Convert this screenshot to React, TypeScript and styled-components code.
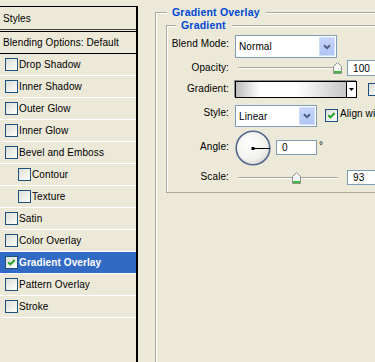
import React from 'react';
import styled, { createGlobalStyle } from 'styled-components';

const GlobalStyle = createGlobalStyle`
  html, body { margin: 0; padding: 0; }
  body {
    background: #ece9d8;
    font-family: "Liberation Sans", Arial, sans-serif;
    font-size: 10px;
    letter-spacing: 0.1px;
    color: #000;
    overflow: hidden;
  }
`;

const Dialog = styled.div`
  display: flex;
  width: 375px;
  height: 362px;
  overflow: hidden;
  background: #ece9d8;
`;

/* ---------- left: styles list ---------- */

const Sidebar = styled.div`
  flex: none;
  width: 138px;
  padding-top: 6px;
  display: flex;
  flex-direction: column;
`;

const StyleList = styled.div`
  flex: 1;
  border-right: 2px solid #000;
`;

const ListHeader = styled.div`
  height: 22px;
  display: flex;
  align-items: center;
  padding-left: 3px;
  border-top: 1px solid #000;
  border-bottom: 1px solid #404040;
  margin-bottom: 1px;
`;

const BlendingRow = styled.div`
  height: 21px;
  display: flex;
  align-items: center;
  padding-left: 3px;
  border-top: 1px solid #000;
  border-bottom: 1px solid #000;
`;

const StyleRow = styled.div<{ $indent: boolean; $active: boolean }>`
  height: 21px;
  display: flex;
  align-items: center;
  gap: 1px;
  padding-left: ${p => (p.$indent ? 18 : 5)}px;
  border-bottom: 1px solid #fff;
  background: ${p => (p.$active ? '#316ac5' : 'transparent')};
  color: ${p => (p.$active ? '#fff' : '#000')};
  font-weight: ${p => (p.$active ? 'bold' : 'normal')};
`;

const CheckFrame = styled.span`
  flex: none;
  box-sizing: border-box;
  width: 13px;
  height: 13px;
  border: 1px solid #1c5180;
  background: linear-gradient(135deg, #dcdcd7 0%, #f3f3ef 65%, #fff 100%);
  display: flex;
  align-items: center;
  justify-content: center;
`;

function CheckBox({ checked }: { checked?: boolean }) {
  return (
    <CheckFrame>
      {checked && (
        <svg width="11" height="11" viewBox="0 0 11 11">
          <path d="M2.3 5.2 L4.4 7.4 L8.6 3" fill="none" stroke="#21a121" strokeWidth="2" />
        </svg>
      )}
    </CheckFrame>
  );
}

const effects = [
  { name: 'Drop Shadow' },
  { name: 'Inner Shadow' },
  { name: 'Outer Glow' },
  { name: 'Inner Glow' },
  { name: 'Bevel and Emboss' },
  { name: 'Contour', sub: true },
  { name: 'Texture', sub: true },
  { name: 'Satin' },
  { name: 'Color Overlay' },
  { name: 'Gradient Overlay', on: true },
  { name: 'Pattern Overlay' },
  { name: 'Stroke' },
];

/* ---------- right: settings ---------- */

const Main = styled.div`
  flex: 1;
  min-width: 0;
  padding: 6px 0 0 17px;
`;

const Group = styled.fieldset<{ $w: number }>`
  margin: 0;
  padding: 0;
  width: ${p => p.$w}px;
  min-width: 0;
  border: 1px solid #aca899;
  box-shadow: inset 1px 1px 0 #fff;
`;

const OuterGroup = styled(Group)`
  min-height: 420px;
`;

const GroupTitle = styled.legend<{ $inset: number }>`
  margin-left: ${p => p.$inset}px;
  padding: 0 6px 0 5px;
  font-size: 10.5px;
  font-weight: bold;
  line-height: 13px;
  letter-spacing: 0.2px;
  color: #0046d5;
  background: #ece9d8;
`;

const OuterBody = styled.div`
  padding-left: 10px;
`;

const Fields = styled.div`
  padding: 3px 0 5px 0;
`;

const FieldRow = styled.div<{ $h: number }>`
  display: flex;
  align-items: flex-start;
  height: ${p => p.$h}px;
`;

const FieldLabel = styled.div<{ $top: number }>`
  flex: none;
  width: 62px;
  margin-right: 6px;
  text-align: right;
  line-height: 12px;
  padding-top: ${p => p.$top}px;
`;

const Combo = styled.div<{ $w: number; $h: number; $top: number }>`
  flex: none;
  box-sizing: border-box;
  width: ${p => p.$w}px;
  height: ${p => p.$h}px;
  margin-top: ${p => p.$top}px;
  padding: 1px;
  border: 1px solid #7f9db9;
  background: #fff;
  display: flex;
  align-items: stretch;
`;

const ComboText = styled.span`
  flex: 1;
  padding-left: 2px;
  display: flex;
  align-items: center;
`;

const ComboButton = styled.span`
  flex: none;
  box-sizing: border-box;
  width: 16px;
  border: 1px solid #d0ddfb;
  border-radius: 1px;
  background: linear-gradient(#c4d4fb, #b2c5f3);
  display: flex;
  align-items: center;
  justify-content: center;
`;

function Select({ value, w, h, top }: { value: string; w: number; h: number; top: number }) {
  return (
    <Combo $w={w} $h={h} $top={top}>
      <ComboText>{value}</ComboText>
      <ComboButton>
        <svg width="8" height="6" viewBox="0 0 8 6">
          <path d="M1 1.2 L4 4.2 L7 1.2" fill="none" stroke="#4d6185" strokeWidth="2" />
        </svg>
      </ComboButton>
    </Combo>
  );
}

const TextField = styled.div<{ $w: number; $h: number; $top: number }>`
  flex: none;
  box-sizing: border-box;
  width: ${p => p.$w}px;
  height: ${p => p.$h}px;
  margin-top: ${p => p.$top}px;
  padding-left: 5px;
  border: 1px solid #7f9db9;
  background: #fff;
  display: flex;
  align-items: center;
`;

const SliderBox = styled.div<{ $top: number }>`
  flex: none;
  position: relative;
  width: 108px;
  height: 14px;
  margin: ${p => p.$top}px 4px 0 0;
`;

const SliderTrack = styled.div`
  width: 100px;
  height: 0;
  margin: 6px 0 0 3px;
  border-top: 1px solid #a5a394;
  border-bottom: 1px solid #fff;
  border-radius: 1px;
`;

const SliderThumb = styled.svg`
  position: absolute;
  top: 1px;
`;

function Slider({ frac, top }: { frac: number; top: number }) {
  return (
    <SliderBox $top={top}>
      <SliderTrack />
      <SliderThumb
        width="9"
        height="12"
        viewBox="0 0 9 12"
        style={{ left: 3 + frac * 99 - 4.5 }}
      >
        <path d="M0.5 4.5 L4.5 0.5 L8.5 4.5 V11.5 H0.5 Z" fill="#f6f6f3" stroke="#8f9190" />
        <rect x="1" y="9" width="7" height="2" fill="#3cba3c" />
      </SliderThumb>
    </SliderBox>
  );
}

const GradientField = styled.div`
  flex: none;
  box-sizing: border-box;
  width: 122px;
  height: 17px;
  margin-top: 3px;
  border: 1px solid #000;
  box-shadow: -1px -1px 0 #8c8c8c;
  display: flex;
`;

const GradientPreview = styled.div`
  flex: 1;
  border-right: 1px solid #000;
  background: linear-gradient(to right, #bdbdbd 0%, #fff 22%, #fff 55%, #c6c6c6 100%);
`;

const PickerArrow = styled.div`
  width: 9px;
  background: #fff;
  display: flex;
  align-items: center;
  justify-content: center;
`;

const Spaced = styled.div<{ $left: number; $top: number }>`
  flex: none;
  display: flex;
  align-items: flex-start;
  gap: 2px;
  margin: ${p => p.$top}px 0 0 ${p => p.$left}px;
  white-space: nowrap;
`;

const InlineText = styled.span<{ $top?: number }>`
  line-height: 12px;
  margin-top: ${p => p.$top ?? 0}px;
`;

const Dial = styled.svg`
  flex: none;
  margin-top: 1px;
`;

export default function App() {
  return (
    <>
      <GlobalStyle />
      <Dialog>
        <Sidebar>
          <StyleList>
            <ListHeader>Styles</ListHeader>
            <BlendingRow>Blending Options: Default</BlendingRow>
            {effects.map(e => (
              <StyleRow key={e.name} $indent={!!e.sub} $active={!!e.on}>
                <CheckBox checked={e.on} />
                <span>{e.name}</span>
              </StyleRow>
            ))}
          </StyleList>
        </Sidebar>

        <Main>
          <OuterGroup $w={300}>
            <GroupTitle $inset={11}>Gradient Overlay</GroupTitle>
            <OuterBody>
              <Group $w={260}>
                <GroupTitle $inset={9}>Gradient</GroupTitle>
                <Fields>
                  <FieldRow $h={24}>
                    <FieldLabel $top={3}>Blend Mode:</FieldLabel>
                    <Select value="Normal" w={102} h={23} top={0} />
                  </FieldRow>

                  <FieldRow $h={19}>
                    <FieldLabel $top={3}>Opacity:</FieldLabel>
                    <Slider frac={1} top={2} />
                    <TextField $w={45} $h={16} $top={1}>100</TextField>
                  </FieldRow>

                  <FieldRow $h={22}>
                    <FieldLabel $top={5}>Gradient:</FieldLabel>
                    <GradientField>
                      <GradientPreview />
                      <PickerArrow>
                        <svg width="5" height="3" viewBox="0 0 5 3">
                          <path d="M0 0 H5 L2.5 3 Z" fill="#000" />
                        </svg>
                      </PickerArrow>
                    </GradientField>
                    <Spaced $left={11} $top={5}>
                      <CheckBox />
                    </Spaced>
                  </FieldRow>

                  <FieldRow $h={29}>
                    <FieldLabel $top={7}>Style:</FieldLabel>
                    <Select value="Linear" w={82} h={22} top={5} />
                    <Spaced $left={8} $top={9}>
                      <CheckBox checked />
                      <InlineText $top={-1}>Align with layer</InlineText>
                    </Spaced>
                  </FieldRow>

                  <FieldRow $h={38}>
                    <FieldLabel $top={12}>Angle:</FieldLabel>
                    <Dial width="36" height="36" viewBox="0 0 36 36">
                      <defs>
                        <radialGradient id="dialFill" cx="40%" cy="35%" r="70%">
                          <stop offset="0%" stopColor="#ffffff" />
                          <stop offset="70%" stopColor="#f1f1ee" />
                          <stop offset="100%" stopColor="#d6d6d2" />
                        </radialGradient>
                      </defs>
                      <circle cx="18" cy="18" r="16.8" fill="url(#dialFill)" stroke="#56698f" strokeWidth="1.6" />
                      <line x1="18" y1="18.5" x2="35" y2="18.5" stroke="#000" strokeWidth="1" />
                      <rect x="16.5" y="17" width="3" height="3" fill="#000" />
                    </Dial>
                    <Spaced $left={5} $top={11}>
                      <TextField $w={41} $h={15} $top={0}>0</TextField>
                      <InlineText>°</InlineText>
                    </Spaced>
                  </FieldRow>

                  <FieldRow $h={20}>
                    <FieldLabel $top={4}>Scale:</FieldLabel>
                    <Slider frac={0.593} top={4} />
                    <TextField $w={45} $h={15} $top={3}>93</TextField>
                  </FieldRow>
                </Fields>
              </Group>
            </OuterBody>
          </OuterGroup>
        </Main>
      </Dialog>
    </>
  );
}
